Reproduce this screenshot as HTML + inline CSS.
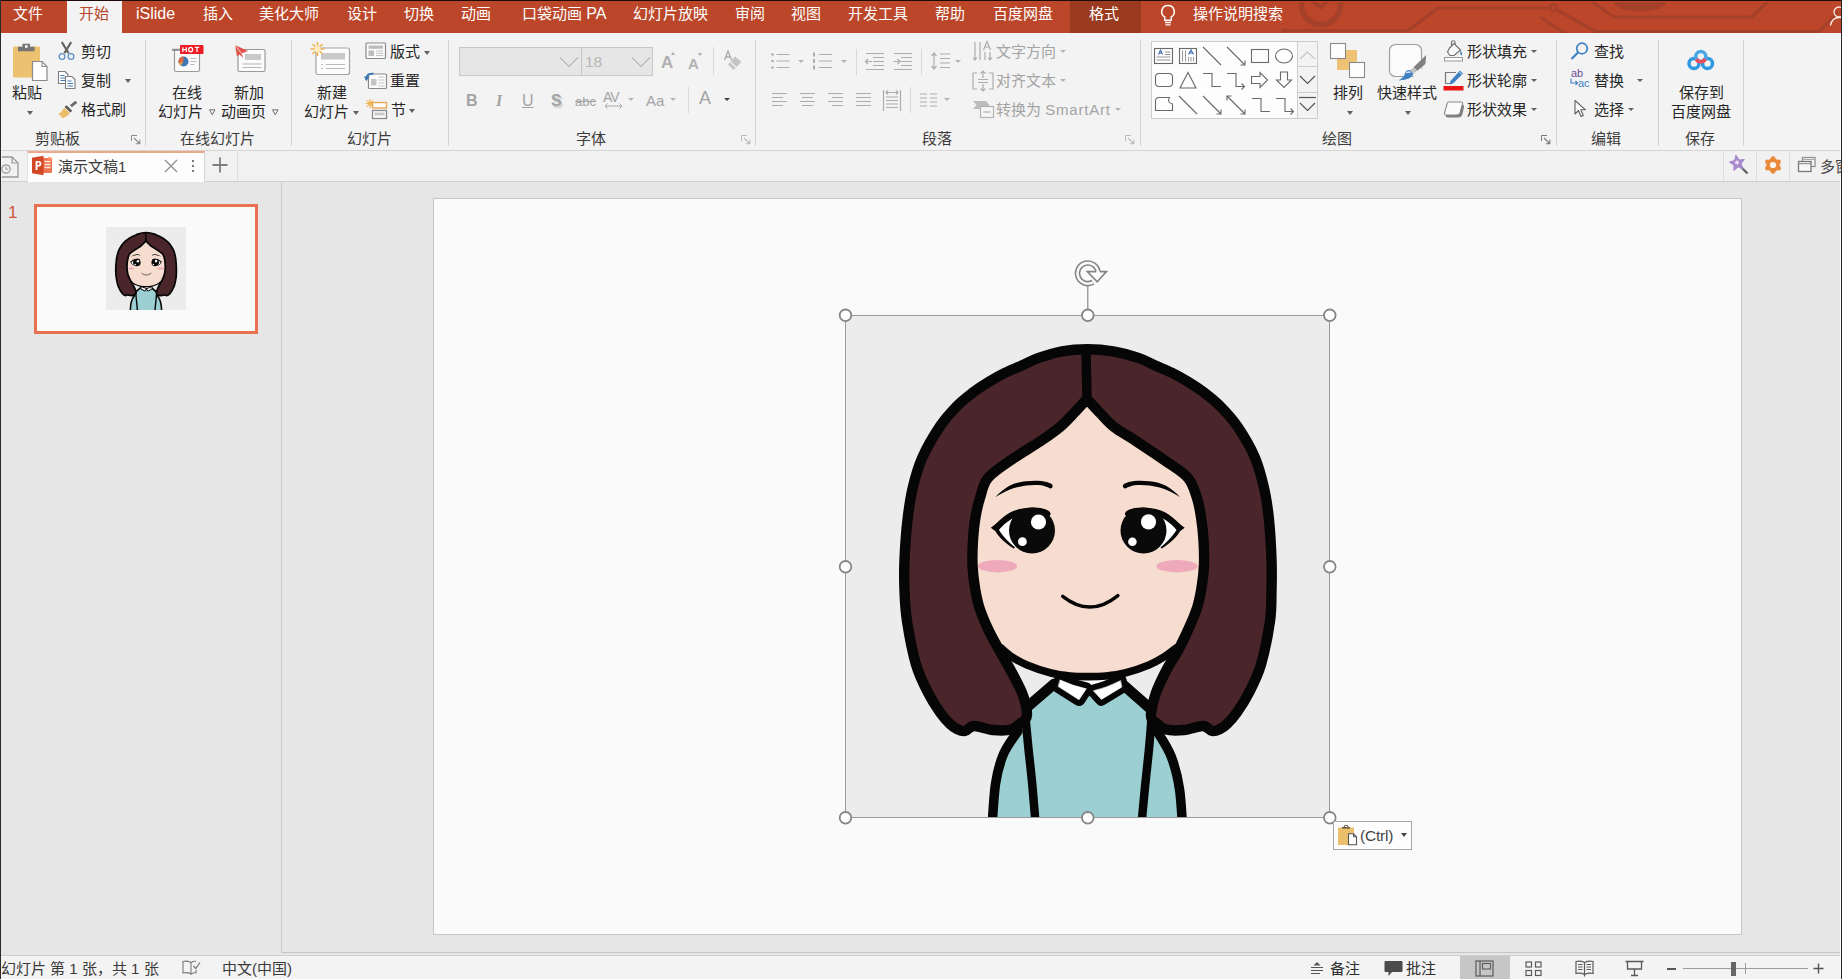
<!DOCTYPE html>
<html lang="zh-CN">
<head>
<meta charset="utf-8">
<title>PowerPoint</title>
<style>
*{box-sizing:border-box;margin:0;padding:0}
html,body{width:1842px;height:979px;overflow:hidden}
body{position:relative;background:#e6e6e6;font-family:"Liberation Sans",sans-serif;font-size:15px;color:#262626}
.a{position:absolute}
.t{position:absolute;white-space:nowrap;line-height:18px;height:18px;font-size:15px;color:#262626;margin-top:1px}
.w{color:#fff}
.g{color:#a3a3a3}
.c{text-align:center}
.sep{position:absolute;width:1px;background:#d2d2d2;top:40px;height:106px}
svg{position:absolute;overflow:visible}
.dd{position:absolute;width:0;height:0;border-left:3.5px solid transparent;border-right:3.5px solid transparent;border-top:4px solid #606060;margin:1px 0 0 1px}
.ddg{border-top-color:#b4b4b4}
.j{text-align:justify;text-align-last:justify;text-justify:inter-character}
span.j{display:inline-block;vertical-align:top;height:18px}
</style>
</head>
<body>
<!-- title / tab bar -->
<div class="a" id="titlebar" style="left:0;top:0;width:1842px;height:33px;background:#bb462a"></div>
<div class="a" style="left:0;top:33px;width:1842px;height:1px;background:#d79c8d"></div>
<div class="a" style="left:1070px;top:0;width:71px;height:33px;background:#993a21"></div>
<div class="a" style="left:1070px;top:33px;width:71px;height:1px;background:#c6968a"></div>
<div class="a" style="left:67px;top:1px;width:55px;height:33px;background:#f3f3f3"></div>
<!-- ribbon -->
<div class="a" id="ribbon" style="left:0;top:33px;width:1842px;height:117px;background:#f3f3f3"></div>
<!-- doc tab row -->
<div class="a" id="tabrow" style="left:0;top:150px;width:1842px;height:32px;background:#f1f1f1;border-top:1px solid #d6d6d6;border-bottom:1px solid #d0d0d0"></div>
<!-- workspace -->
<div class="a" style="left:281px;top:182px;width:1px;height:771px;background:#c9c9c9"></div>
<div class="a" style="left:282px;top:952px;width:1560px;height:1px;background:#c6c6c6"></div>
<!-- slide -->
<div class="a" id="slide" style="left:433px;top:198px;width:1309px;height:737px;background:#fafafa;border:1px solid #c6c6c6"></div>
<!-- status bar -->
<div class="a" id="status" style="left:0;top:955px;width:1842px;height:24px;background:#f3f3f3;border-top:1px solid #cfcfcf"></div>
<!-- window edge -->
<div class="a" style="left:0;top:0;width:1842px;height:1px;background:#1c0c08"></div>
<div class="a" style="left:0;top:0;width:1px;height:979px;background:#2b2b2b"></div>
<div class="a" style="left:1840px;top:34px;width:1px;height:945px;background:#fafafa"></div>
<div class="a" style="left:1841px;top:0;width:1px;height:979px;background:#262626"></div>
<!-- ribbon tabs -->
<div class="t w j" style="left:13px;top:4px;width:30px">文件</div>
<div class="t j" style="left:79px;top:4px;color:#b7472a;width:30px">开始</div>
<div class="t w" style="left:136px;top:4px;font-size:16px">iSlide</div>
<div class="t w j" style="left:203px;top:4px;width:30px">插入</div>
<div class="t w j" style="left:259px;top:4px;width:60px">美化大师</div>
<div class="t w j" style="left:347px;top:4px;width:30px">设计</div>
<div class="t w j" style="left:404px;top:4px;width:30px">切换</div>
<div class="t w j" style="left:461px;top:4px;width:30px">动画</div>
<div class="t w" style="left:522px;top:4px"><span class="j" style="width:60px">口袋动画</span> <span style="font-size:16px">PA</span></div>
<div class="t w j" style="left:633px;top:4px;width:75px">幻灯片放映</div>
<div class="t w j" style="left:735px;top:4px;width:30px">审阅</div>
<div class="t w j" style="left:791px;top:4px;width:30px">视图</div>
<div class="t w j" style="left:848px;top:4px;width:60px">开发工具</div>
<div class="t w j" style="left:935px;top:4px;width:30px">帮助</div>
<div class="t w j" style="left:993px;top:4px;width:60px">百度网盘</div>
<div class="t w j" style="left:1089px;top:4px;width:30px">格式</div>
<svg style="left:1158px;top:2px" width="20" height="26" viewBox="0 0 20 26"><path d="M10,3.500 a6.200,6.200 0 0 1 3.300,11.500 v3.200 h-6.600 v-3.200 a6.200,6.200 0 0 1 3.300,-11.500 z" fill="none" stroke="#fff" stroke-width="1.500"/><path d="M7,20.500 h6 M7.500,22.800 h5" stroke="#fff" stroke-width="1.300"/></svg>
<div class="t w j" style="left:1193px;top:4px;width:90px">操作说明搜索</div>
<!-- decorative title-bar pattern -->
<svg style="left:1270px;top:2px;overflow:hidden" width="572" height="31" viewBox="1270 2 572 31">
<g fill="none" stroke="#a5412a" stroke-width="3.200" stroke-linejoin="round">
<circle cx="1321" cy="5" r="19.500" stroke-width="5.500"/><path d="M1311,0 L1321,7.500 L1329,-1" stroke-width="4"/>
<path d="M1282,30.500 H1408 L1438,8 H1549"/><circle cx="1553.500" cy="7.500" r="3.200" stroke-width="2.600"/>
<path d="M1557,10 L1596,31.500 H1819 L1838,12"/>
<path d="M1540,17 L1566,34"/>
<path d="M1592,2 L1614,17 H1752 L1768,1"/>
</g>
<ellipse cx="1640" cy="1" rx="27" ry="10.500" fill="#a5412a"/>
<circle cx="1284" cy="30.500" r="2.500" fill="#a5412a"/>
</svg>
<svg style="left:1826px;top:2px;overflow:hidden" width="15" height="28" viewBox="1826 2 15 28"><circle cx="1839" cy="12" r="5" fill="none" stroke="#fbe9e2" stroke-width="1.300"/><path d="M1830.500,25.500 Q1832,17.500 1839,17.500 Q1842,17.500 1844,19" fill="none" stroke="#fbe9e2" stroke-width="1.300"/></svg>
<!-- document tab row -->
<div class="a" style="left:27px;top:151px;width:178px;height:31px;background:#fdfdfd;border-top:2px solid #eca888;border-right:1px solid #d4d4d4;border-left:1px solid #e2e2e2"></div>
<svg style="left:0;top:155px" width="22" height="24" viewBox="0 0 22 24"><path d="M2,2 h10 l6,6 v14 h-16" fill="none" stroke="#9a9a9a" stroke-width="1.300"/><path d="M12,2 v6 h6" fill="none" stroke="#9a9a9a" stroke-width="1.200"/><circle cx="6" cy="14" r="4.200" fill="none" stroke="#9a9a9a" stroke-width="1.200"/><path d="M6,11.500 v2.700 h2.200" fill="none" stroke="#9a9a9a" stroke-width="1.100"/></svg>
<svg style="left:32px;top:155px" width="21" height="21" viewBox="0 0 21 21"><rect x="6" y="3" width="14" height="15" rx="1.200" fill="#f0734f"/><path d="M12.500,6.500 h6 M12.500,9.500 h6 M12.500,12.500 h6" stroke="#fde5dc" stroke-width="1.500"/><circle cx="17.500" cy="4" r="2" fill="#ff8f5e"/><path d="M0,2.800 L11.500,0.800 V20.200 L0,18.200 Z" fill="#d24726"/><path d="M3.600,6 h3 q2.800,0 2.800,2.700 q0,2.800 -2.800,2.800 h-1.100 v3.500 h-1.900 z M5.500,7.500 v2.500 h0.900 q1.200,0 1.200,-1.250 q0,-1.250 -1.200,-1.250 z" fill="#fff" fill-rule="evenodd"/></svg>
<div class="t" style="left:58px;top:157px;color:#3a3a3a"><span class="j" style="width:60px">演示文稿</span>1</div>
<svg style="left:164px;top:159px" width="14" height="14" viewBox="0 0 14 14"><path d="M1,1 L13,13 M13,1 L1,13" stroke="#8e8e8e" stroke-width="1.300"/></svg>
<div class="a" style="left:192px;top:160px;width:2px;height:2px;background:#7a7a7a;box-shadow:0 5px 0 #7a7a7a,0 10px 0 #7a7a7a"></div>
<svg style="left:212px;top:157px" width="16" height="16" viewBox="0 0 16 16"><path d="M8,0.500 V15.500 M0.500,8 H15.500" stroke="#7d7d7d" stroke-width="1.800"/></svg>
<div class="a" style="left:237px;top:152px;width:1px;height:29px;background:#dcdcdc"></div>
<div class="a" style="left:1723px;top:152px;width:1px;height:29px;background:#dcdcdc"></div>
<div class="a" style="left:1756px;top:152px;width:1px;height:29px;background:#dcdcdc"></div>
<div class="a" style="left:1789px;top:152px;width:1px;height:29px;background:#dcdcdc"></div>
<svg style="left:1728px;top:154px" width="22" height="22" viewBox="0 0 22 22"><path d="M11.500,11.500 L19.500,19.500" stroke="#5e5e66" stroke-width="2.300"/><path d="M7.9,1.5 L10.9,6.0 L16.2,5.5 L12.9,9.7 L14.9,14.6 L9.9,12.7 L5.9,16.2 L6.1,10.9 L1.6,8.1 L6.7,6.7 Z" fill="#a88acf" stroke="#a88acf" stroke-width="1.200" stroke-linejoin="round"/><circle cx="9" cy="8.500" r="2" fill="#eeddf6"/></svg>
<svg style="left:1763px;top:155px" width="20" height="20" viewBox="0 0 20 20"><g fill="#e98b3b"><circle cx="10" cy="10" r="6.800"/><circle cx="10.00" cy="3.60" r="2.400"/><circle cx="15.54" cy="6.80" r="2.400"/><circle cx="15.54" cy="13.20" r="2.400"/><circle cx="10.00" cy="16.40" r="2.400"/><circle cx="4.46" cy="13.20" r="2.400"/><circle cx="4.46" cy="6.80" r="2.400"/></g><circle cx="10" cy="10" r="3.100" fill="#fbf6f1"/></svg>
<svg style="left:1797px;top:156px" width="19" height="17" viewBox="0 0 19 17"><rect x="5.500" y="1.500" width="12.500" height="9" fill="#f4f4f4" stroke="#8c8c8c" stroke-width="1.200"/><path d="M5.500,3.500 h12.500" stroke="#a9a9a9" stroke-width="1"/><rect x="1.500" y="5.500" width="12.500" height="10" fill="#f7f7f7" stroke="#777" stroke-width="1.300"/><path d="M1.500,7.700 h12.500" stroke="#8c8c8c" stroke-width="1.100"/></svg>
<div class="t j" style="left:1820px;top:157px;color:#444;width:30px">多窗</div>
<!-- thumbnail pane -->
<div class="t" style="left:8px;top:203px;font-size:17px;color:#d0553a">1</div>
<div class="a" style="left:34px;top:204px;width:224px;height:130px;background:#fafafa;border:3px solid #e8714f"></div>
<!-- ribbon: clipboard -->
<svg style="left:11px;top:41px" width="38" height="42" viewBox="0 0 38 42">
<rect x="2" y="5.500" width="27" height="31" rx="1" fill="#ecc16f"/>
<path d="M7,10.200 v-4.500 h4.500 v-3 h7.500 v3 h4.500 v4.500 z" fill="#757575"/><rect x="14" y="4.200" width="2.600" height="2.600" fill="#f5f5f5"/>
<path d="M21.500,20.500 h9.500 l5,5 v14 h-14.500 z" fill="#fff" stroke="#8c8c8c" stroke-width="1.200"/><path d="M31,20.500 v5 h5" fill="none" stroke="#8c8c8c" stroke-width="1.100"/>
</svg>
<div class="t j" style="left:12px;top:83px;width:30px">粘贴</div>
<div class="dd" style="left:26px;top:110px"></div>
<svg style="left:57px;top:41px" width="19" height="20" viewBox="0 0 19 20">
<path d="M4.800,1 L11.600,12.300 M14.200,1 L7.400,12.300" stroke="#636363" stroke-width="2.200" fill="none"/>
<circle cx="5" cy="15.500" r="2.900" fill="#eef3f8" stroke="#5d8ec4" stroke-width="1.300"/><circle cx="14" cy="15.500" r="2.900" fill="#eef3f8" stroke="#5d8ec4" stroke-width="1.300"/>
</svg>
<div class="t j" style="left:81px;top:42px;width:30px">剪切</div>
<svg style="left:57px;top:70px" width="20" height="20" viewBox="0 0 20 20">
<path d="M1.500,1.500 h6.500 l3,3 v9 h-9.500 z" fill="#fff" stroke="#7d7d7d" stroke-width="1.100"/><path d="M3.500,5.500 h4 M3.500,8 h5 M3.500,10.500 h5" stroke="#3f78b6" stroke-width="1"/>
<path d="M8.500,6.500 h6.500 l3,3 v9 h-9.500 z" fill="#fff" stroke="#7d7d7d" stroke-width="1.100"/><path d="M10.500,11 h4 M10.500,13.500 h5.500 M10.500,16 h5.500" stroke="#3f78b6" stroke-width="1"/>
</svg>
<div class="t j" style="left:81px;top:71px;width:30px">复制</div>
<div class="dd" style="left:124px;top:78px"></div>
<svg style="left:57px;top:100px" width="21" height="19" viewBox="0 0 21 19">
<path d="M13,5 L18.500,0.800 L20.200,3 L14.800,7.300 Z" fill="#6b6b6b"/>
<path d="M9.500,5.200 L15.200,10.800 L13.300,12.500 L7.600,7 Z" fill="#555"/>
<path d="M7,7.500 L12.800,13 Q10,17.500 5,18.200 Q4,15 1,13.800 Q5,12.500 7,7.500 Z" fill="#e9bd6a"/>
</svg>
<div class="t j" style="left:81px;top:100px;width:45px">格式刷</div>
<div class="t j" style="left:35px;top:129px;color:#3b3b3b;width:45px">剪贴板</div>
<svg class="launch" style="left:131px;top:135px" width="10" height="10" viewBox="0 0 10 10"><path d="M0.500,6 V0.500 H6" fill="none" stroke="#8a8a8a" stroke-width="1"/><path d="M3,3 L8.500,8.500 M8.800,4.800 V8.800 H4.800" fill="none" stroke="#8a8a8a" stroke-width="1.100"/></svg>
<div class="sep" style="left:145px"></div>
<!-- ribbon: online slides -->
<svg style="left:170px;top:44px" width="36" height="30" viewBox="0 0 36 30">
<rect x="4.500" y="5.500" width="25" height="22" rx="1.500" fill="#fbfbfb" stroke="#9a9a9a" stroke-width="1.200"/>
<path d="M2,5.800 h8" stroke="#8c8c8c" stroke-width="2"/>
<circle cx="13.500" cy="17.500" r="5" fill="#3e78b5"/><path d="M13.500,17.500 L13.500,12.500 A5,5 0 0 0 8.700,19 Z" fill="#e3673f"/><path d="M13.500,17.500 L8.700,19 A5,5 0 0 0 11,21.800 Z" fill="#f0a13a"/>
<path d="M20.500,14.500 h6 M20.500,17.500 h6 M20.500,20.500 h4" stroke="#b9b9b9" stroke-width="1.200"/>
<rect x="10" y="1" width="23.500" height="9" rx="0.800" fill="#ea1c24"/>
<path d="M12.800,3.300 v4.600 M16.300,3.300 v4.600 M12.800,5.600 h3.500 M18.600,5.600 a2,2.300 0 1 0 4,0 a2,2.300 0 1 0 -4,0 M24.800,3.400 h4.400 M27,3.400 v4.500" stroke="#fff" stroke-width="1.250" fill="none"/>
</svg>
<div class="t j" style="left:172px;top:83px;width:30px">在线</div>
<div class="t j" style="left:158px;top:102px;width:45px">幻灯片</div>
<svg style="left:208.500px;top:108.500px" width="6.500" height="6.500" viewBox="0 0 8 8"><path d="M0.600,1 h6.800 L4,7 z" fill="none" stroke="#555" stroke-width="1"/></svg>
<svg style="left:232px;top:44px" width="36" height="30" viewBox="0 0 36 30">
<rect x="6" y="5.500" width="27" height="22" rx="1.500" fill="#fbfbfb" stroke="#9a9a9a" stroke-width="1.200"/>
<rect x="13" y="10" width="16" height="6" fill="#c9c9c9"/><path d="M10.500,20 h19 M10.500,23.500 h19" stroke="#b5b5b5" stroke-width="1.200"/>
<path d="M3,1 L16,7 L9.500,9.500 L11.500,14 L7.500,10.500 L5,12.500 Z" fill="#e0534a"/><path d="M3,1 L9.500,9.500" stroke="#fbd9d5" stroke-width=".9"/>
</svg>
<div class="t j" style="left:234px;top:83px;width:30px">新加</div>
<div class="t j" style="left:221px;top:102px;width:45px">动画页</div>
<svg style="left:271.500px;top:108.500px" width="6.500" height="6.500" viewBox="0 0 8 8"><path d="M0.600,1 h6.800 L4,7 z" fill="none" stroke="#555" stroke-width="1"/></svg>
<div class="t j" style="left:180px;top:129px;color:#3b3b3b;width:75px">在线幻灯片</div>
<div class="sep" style="left:291px"></div>
<!-- ribbon: slides -->
<svg style="left:308px;top:40px" width="46" height="38" viewBox="0 0 46 38">
<rect x="8" y="8" width="33.500" height="26.500" rx="2" fill="#fcfcfc" stroke="#a3a3a3" stroke-width="1.200"/>
<rect x="13" y="13" width="24" height="6.500" fill="#c9c9c9"/><path d="M13,24.500 h2 M18,24.500 h19 M13,28.500 h2 M18,28.500 h19" stroke="#b9b9b9" stroke-width="1.200"/>
<g stroke="#efb352" stroke-width="1.500"><path d="M9.500,2 v14 M2.500,9 h14 M4.500,4 l10,10 M14.500,4 l-10,10"/></g><circle cx="9.500" cy="9" r="3.200" fill="#fde9c0"/>
</svg>
<div class="t j" style="left:317px;top:83px;width:30px">新建</div>
<div class="t j" style="left:304px;top:102px;width:45px">幻灯片</div>
<div class="dd" style="left:352px;top:110px"></div>
<svg style="left:365px;top:42px" width="22" height="18" viewBox="0 0 22 18"><rect x="1" y="1" width="19.500" height="15.500" rx="1" fill="#fcfcfc" stroke="#8a8a8a" stroke-width="1.200"/><rect x="3.500" y="3.500" width="14.500" height="3.300" fill="#bdbdbd"/><rect x="3.500" y="8.500" width="5.500" height="5.500" fill="#bdbdbd"/><path d="M11,9 h7 M11,11.300 h7 M11,13.600 h7" stroke="#bdbdbd" stroke-width="1"/></svg>
<div class="t j" style="left:390px;top:42px;width:30px">版式</div>
<div class="dd" style="left:423px;top:50px"></div>
<svg style="left:364px;top:70px" width="24" height="20" viewBox="0 0 24 20"><rect x="4.500" y="4" width="18" height="14.500" rx="1" fill="#fcfcfc" stroke="#8a8a8a" stroke-width="1.200"/><rect x="7" y="9" width="5.500" height="6.500" fill="#c3c3c3"/><path d="M14.500,7 h6 M14.500,10 h6 M14.500,13 h6 M14.500,16 h6" stroke="#c3c3c3" stroke-width="1"/><path d="M2,9.500 Q2.500,3 9.500,3.800" fill="none" stroke="#3e78b5" stroke-width="2"/><path d="M0,6.500 L5.500,6.500 L2.400,11.200 Z" fill="#3e78b5"/></svg>
<div class="t j" style="left:390px;top:71px;width:30px">重置</div>
<svg style="left:365px;top:98px" width="24" height="22" viewBox="0 0 24 22"><g stroke="#efb352" stroke-width="1.200"><path d="M5,1 v9 M0.500,5.500 h9 M1.800,2.300 l6.400,6.400 M8.200,2.300 l-6.400,6.400"/></g><rect x="7.500" y="4.500" width="14" height="5.500" fill="#fcfcfc" stroke="#e8a553" stroke-width="1.400"/><rect x="7.500" y="12.500" width="14" height="8" fill="#fcfcfc" stroke="#8a8a8a" stroke-width="1.300"/><rect x="9.500" y="14.500" width="10" height="3" fill="#c9c9c9"/></svg>
<div class="t j" style="left:391px;top:100px;width:15px">节</div>
<div class="dd" style="left:408px;top:108px"></div>
<div class="t j" style="left:347px;top:129px;color:#3b3b3b;width:45px">幻灯片</div>
<div class="sep" style="left:448px"></div>
<!-- ribbon: font (disabled) -->
<div class="a" style="left:459px;top:47px;width:123px;height:29px;background:#e6e6e6;border:1px solid #c8c8c8"></div>
<div class="a" style="left:581px;top:47px;width:72px;height:29px;background:#e6e6e6;border:1px solid #c8c8c8"></div>
<svg style="left:559px;top:56px" width="20" height="12" viewBox="0 0 20 12"><path d="M1,1.500 L10,10.500 L19,1.500" fill="none" stroke="#b9b9b9" stroke-width="1.200"/></svg>
<svg style="left:631px;top:56px" width="20" height="12" viewBox="0 0 20 12"><path d="M1,1.500 L10,10.500 L19,1.500" fill="none" stroke="#b9b9b9" stroke-width="1.200"/></svg>
<div class="t g" style="left:585px;top:52px;color:#b6b6b6;font-size:15.500px">18</div>
<div class="t g" style="left:661px;top:53px;font-size:17px;font-weight:bold;color:#b0b0b0">A</div><div class="a" style="left:671px;top:52px;border:2.500px solid transparent;border-bottom:3px solid #a9a9a9;border-top:0"></div>
<div class="t g" style="left:688px;top:54px;font-size:15px;font-weight:bold;color:#b0b0b0">A</div><div class="a" style="left:698px;top:53px;border:2.500px solid transparent;border-top:3px solid #a9a9a9;border-bottom:0"></div>
<div class="a" style="left:713px;top:47px;width:1px;height:28px;background:#d8d8d8"></div>
<svg style="left:722px;top:49px" width="22" height="24" viewBox="0 0 22 24"><path d="M2.500,11 L6,2 L9.500,11 M3.700,8 h4.600" fill="none" stroke="#a9a9a9" stroke-width="1.300"/><path d="M13,7.500 L19.500,13 L11.500,21 L6,15.500 Z" fill="#c4c4c4"/><path d="M8.500,13 L14,18.500" stroke="#f3f3f3" stroke-width="1.200"/></svg>
<div class="t g" style="left:466px;top:91px;font-size:16px;font-weight:bold">B</div>
<div class="t g" style="left:496px;top:91px;font-size:16px;font-style:italic;font-family:'Liberation Serif',serif;font-weight:bold">I</div>
<div class="t g" style="left:522px;top:91px;font-size:16px;text-decoration:underline">U</div>
<div class="t g" style="left:551px;top:91px;font-size:16px;font-weight:bold;text-shadow:1.500px 1.500px 1px #d0d0d0">S</div>
<div class="t g" style="left:575px;top:92px;font-size:13px;text-decoration:line-through">abc</div>
<div class="t g" style="left:603px;top:87px;font-size:14px;letter-spacing:-1px">AV</div>
<svg style="left:604px;top:103px" width="19" height="6" viewBox="0 0 19 6"><path d="M1,3 h17 M3.500,0.500 L1,3 L3.500,5.500 M15.500,0.500 L18,3 L15.500,5.500" fill="none" stroke="#a9a9a9" stroke-width="1"/></svg>
<div class="dd ddg" style="left:628px;top:98px;border-width:3px 3px 0 3px;margin:0"></div>
<div class="t g" style="left:646px;top:91px;font-size:15px">Aa</div>
<div class="dd ddg" style="left:670px;top:98px;border-width:3px 3px 0 3px;margin:0"></div>
<div class="a" style="left:688px;top:87px;width:1px;height:26px;background:#d8d8d8"></div>
<div class="t g" style="left:699px;top:88px;font-size:18px">A</div>
<div class="dd" style="left:724px;top:98px;border-width:3.500px 3px 0 3px;margin:0;border-top-color:#444"></div>
<div class="t j" style="left:576px;top:129px;color:#3b3b3b;width:30px">字体</div>
<svg style="left:741px;top:135px" width="10" height="10" viewBox="0 0 10 10"><path d="M0.500,6 V0.500 H6" fill="none" stroke="#bdbdbd" stroke-width="1"/><path d="M3,3 L8.500,8.500 M8.800,4.800 V8.800 H4.800" fill="none" stroke="#bdbdbd" stroke-width="1.100"/></svg>
<div class="sep" style="left:755px"></div>
<!-- ribbon: paragraph (disabled) -->
<svg style="left:770px;top:51px" width="190" height="22" viewBox="770 52 190 22">
<g stroke="#adadad" stroke-width="1.200" fill="none">
<path d="M776.500,55.500 h13 M776.500,62 h13 M776.500,68.500 h13"/>
<path d="M819,55.500 h13 M819,62 h13 M819,68.500 h13"/>
<path d="M866,54.500 h18 M873,58.500 h11 M873,62.500 h11 M873,66.500 h11 M866,70.500 h18 M872,62.500 h-6.500 M868,60 l-2.500,2.500 2.500,2.500"/>
<path d="M894,54.500 h18 M901,58.500 h11 M901,62.500 h11 M901,66.500 h11 M894,70.500 h18 M893.500,62.500 h6.500 M897.500,60 l2.500,2.500 -2.500,2.500"/>
<path d="M940,55 h10 M940,59.500 h10 M940,64 h10 M940,68.500 h10"/>
<path d="M934,54 v16 M931.500,57 l2.500,-3 2.500,3 M931.500,67 l2.500,3 2.500,-3"/>
</g>
<g fill="#adadad"><circle cx="772.500" cy="55.500" r="1.300"/><circle cx="772.500" cy="62" r="1.300"/><circle cx="772.500" cy="68.500" r="1.300"/>
<rect x="813" y="53.500" width="2" height="4"/><rect x="813" y="60" width="2" height="4"/><rect x="813" y="66.500" width="2" height="4"/></g>
</svg>
<div class="dd ddg" style="left:798px;top:60px;border-width:3px 3px 0 3px;margin:0"></div>
<div class="dd ddg" style="left:841px;top:60px;border-width:3px 3px 0 3px;margin:0"></div>
<div class="dd ddg" style="left:955px;top:60px;border-width:3px 3px 0 3px;margin:0"></div>
<div class="a" style="left:856px;top:49px;width:1px;height:26px;background:#d8d8d8"></div>
<div class="a" style="left:921px;top:49px;width:1px;height:26px;background:#d8d8d8"></div>
<svg style="left:770px;top:88px" width="190" height="24" viewBox="770 88 190 24">
<g stroke="#adadad" stroke-width="1.200" fill="none">
<path d="M772,93.500 h15 M772,97.500 h11 M772,101.500 h15 M772,105.500 h11"/>
<path d="M800,93.500 h15 M802,97.500 h11 M800,101.500 h15 M802,105.500 h11"/>
<path d="M828,93.500 h15 M832,97.500 h11 M828,101.500 h15 M832,105.500 h11"/>
<path d="M856,93.500 h15 M856,97.500 h15 M856,101.500 h15 M856,105.500 h15"/>
<path d="M883.500,90 v21 M900.500,90 v21 M886,92.500 h12 M888,90.500 l-2,2 2,2 M896,90.500 l2,2 -2,2 M886,97 h12 M886,100.500 h12 M886,104 h12 M886,107.500 h12"/>
<path d="M920,94 h7 M920,98 h7 M920,102 h7 M920,106 h7 M930,94 h7 M930,98 h7 M930,102 h7 M930,106 h7"/>
</g></svg>
<div class="dd ddg" style="left:944px;top:98px;border-width:3px 3px 0 3px;margin:0"></div>
<div class="a" style="left:910px;top:87px;width:1px;height:26px;background:#d8d8d8"></div>
<svg style="left:972px;top:40px" width="22" height="22" viewBox="0 0 22 22"><g stroke="#adadad" stroke-width="1.200" fill="none"><path d="M3,2 v18 M1,17.500 l2,2.500 2,-2.500 M8,2 v18 M13,12 v8 M18,12 v8 M16,17.500 l2,2.500 2,-2.500"/><path d="M11.500,10 L15,1.500 L18.500,10 M12.800,7 h4.400"/></g></svg>
<div class="t g j" style="left:996px;top:42px;width:60px">文字方向</div>
<div class="dd ddg" style="left:1060px;top:50px;border-width:3px 3px 0 3px;margin:0"></div>
<svg style="left:972px;top:70px" width="22" height="22" viewBox="0 0 22 22"><g stroke="#adadad" stroke-width="1.200" fill="none"><path d="M5,3 h-4 v16 h4 M17,3 h4 v16 h-4"/><path d="M11,1 v7 M8.500,3.500 l2.500,-2.500 2.500,2.500 M11,21 v-7 M8.500,18.500 l2.500,2.500 2.500,-2.500 M6,9.500 h10 M6,12.500 h10"/></g></svg>
<div class="t g j" style="left:996px;top:71px;width:60px">对齐文本</div>
<div class="dd ddg" style="left:1060px;top:79px;border-width:3px 3px 0 3px;margin:0"></div>
<svg style="left:972px;top:99px" width="24" height="20" viewBox="0 0 24 20"><path d="M1,2 h13 l3.500,4 -3.500,4 h-13 l3.500,-4 z" fill="#bdbdbd"/><rect x="8.500" y="7.500" width="13" height="11" fill="#f6f6f6" stroke="#b3b3b3" stroke-width="1.200"/><path d="M11.500,13 h7" stroke="#b3b3b3" stroke-width="1.200"/></svg>
<div class="t g" style="left:996px;top:100px"><span class="j" style="width:45px">转换为</span> <span style="letter-spacing:.8px">SmartArt</span></div>
<div class="dd ddg" style="left:1115px;top:108px;border-width:3px 3px 0 3px;margin:0"></div>
<div class="t j" style="left:922px;top:129px;color:#3b3b3b;width:30px">段落</div>
<svg style="left:1125px;top:135px" width="10" height="10" viewBox="0 0 10 10"><path d="M0.500,6 V0.500 H6" fill="none" stroke="#bdbdbd" stroke-width="1"/><path d="M3,3 L8.500,8.500 M8.800,4.800 V8.800 H4.800" fill="none" stroke="#bdbdbd" stroke-width="1.100"/></svg>
<div class="sep" style="left:1140px"></div>
<!-- ribbon: drawing -->
<div class="a" style="left:1151px;top:41px;width:167px;height:78px;background:#fdfdfd;border:1px solid #cdcdcd"></div>
<div class="a" style="left:1297px;top:41px;width:21px;height:78px;background:#f3f3f3;border:1px solid #cdcdcd"></div>
<div class="a" style="left:1297px;top:66px;width:21px;height:27px;border-top:1px solid #cdcdcd;border-bottom:1px solid #cdcdcd"></div>
<svg style="left:1151px;top:41px" width="167" height="78" viewBox="1151 41 167 78">
<g stroke="#6a6a6a" stroke-width="1.100" fill="none">
<!-- row 1 -->
<rect x="1154.500" y="48.500" width="18" height="15"/><path d="M1156.500,57 h14 M1156.500,60 h14 M1165,52 h5.500 M1165,54.500 h5.500" stroke="#9a9a9a" stroke-width="1"/>
<rect x="1179.500" y="48.500" width="17" height="15"/><path d="M1182.500,50.500 v11 M1185.500,50.500 v11 M1188.500,57 v4.500 M1191,57 v4.500 M1193.500,57 v4.500" stroke="#9a9a9a" stroke-width="1"/>
<path d="M1203,47 L1221,65"/>
<path d="M1227,47 L1245,65 M1245,60.500 V65 H1240.500"/>
<rect x="1251.500" y="49.500" width="17" height="13"/>
<ellipse cx="1284" cy="56" rx="8.500" ry="7"/>
<!-- row 2 -->
<rect x="1155.500" y="73.500" width="17" height="13" rx="3.500"/>
<path d="M1188,72.500 L1196,88 H1180 Z"/>
<path d="M1203,73.500 H1212 V86.500 H1221"/>
<path d="M1227,73.500 H1236 V86.500 H1244.500 M1241.500,83.500 l3,3 -3,3"/>
<path d="M1251.500,76.500 H1260 V72.500 L1267.500,80 L1260,87.500 V83.500 H1251.500 Z"/>
<path d="M1280.500,72 H1287.500 V80 H1291.500 L1284,87.500 L1276.500,80 H1280.500 Z"/>
<!-- row 3 -->
<path d="M1155.500,101 Q1155.500,97.500 1159,97.500 H1169.500 Q1166.500,102.500 1172.500,104 V110.500 H1155.500 Z"/>
<path d="M1179,96 L1197,114"/>
<path d="M1203,96 L1221,114 M1221,109.500 V114 H1216.500"/>
<path d="M1227,96 L1245,114 M1245,109.500 V114 H1240.500 M1227,100.500 V96 H1231.500"/>
<path d="M1252,98.500 H1261 V111.500 H1270"/>
<path d="M1276,98.500 H1285 V111.500 H1293.500 M1290.500,108.500 l3,3 -3,3"/>
</g>
<path d="M1158.500,54.500 L1160.500,50 L1162.500,54.500 M1159.200,53 h2.600" fill="none" stroke="#3e6fb0" stroke-width="1.100"/>
<path d="M1188.500,54.500 L1191,50 L1193.500,54.500 M1189.300,53 h3.400" fill="none" stroke="#3e6fb0" stroke-width="1.100"/>
<path d="M1300,59 L1307.500,52 L1315,59" fill="none" stroke="#c5c5c5" stroke-width="1.200"/>
<path d="M1300,76 L1307.500,83.500 L1315,76" fill="none" stroke="#555" stroke-width="1.200"/>
<path d="M1299,97.500 h17" stroke="#555" stroke-width="1.200"/>
<path d="M1300,103 L1307.500,110.500 L1315,103" fill="none" stroke="#555" stroke-width="1.200"/>
</svg>
<svg style="left:1328px;top:41px" width="40" height="40" viewBox="0 0 40 40"><rect x="9" y="9" width="20" height="20" fill="#edc274"/><rect x="2.500" y="2.500" width="15" height="15" fill="#fdfdfd" stroke="#8a8a8a" stroke-width="1.100"/><rect x="21.500" y="21.500" width="15" height="15" fill="#fdfdfd" stroke="#8a8a8a" stroke-width="1.100"/></svg>
<div class="t j" style="left:1333px;top:83px;width:30px">排列</div>
<div class="dd" style="left:1346px;top:110px"></div>
<svg style="left:1386px;top:41px" width="44" height="44" viewBox="0 0 44 44">
<rect x="3.500" y="3.500" width="32" height="32" rx="6" fill="#fbfbfb" stroke="#9d9d9d" stroke-width="1.200"/>
<path d="M36,28 L28,36" stroke="#f3f3f3" stroke-width="7"/>
<path d="M40.200,14 L39.400,23 L31.300,29.800 L27.600,26.200 Z" fill="#808080"/><path d="M31.300,29.800 L27.600,26.200 L23.800,29.200 L27.300,33 Z" fill="#c2c2c2"/>
<path d="M23.800,29.200 L27.300,33 Q26,38.500 12.500,39.500 Q18.500,36 18.800,32.500 Q20.500,28.500 23.800,29.200 Z" fill="#3f7fc4"/><path d="M20.300,32 q2.200,-1.700 4,-0.300" stroke="#d6e6f5" stroke-width="1.500" fill="none"/>
</svg>
<div class="t j" style="left:1377px;top:83px;width:60px">快速样式</div>
<div class="dd" style="left:1404px;top:110px"></div>
<svg style="left:1443px;top:40px" width="22" height="22" viewBox="0 0 22 22"><path d="M6.500,8 L11,3.500 L17.500,10 L11,15.500 H7 L4.500,12 Z" fill="#fbfbfb" stroke="#6f6f6f" stroke-width="1.200"/><path d="M8.500,6 V2.500 a1.800,1.800 0 0 1 3.600,0 v2" fill="none" stroke="#6f6f6f" stroke-width="1.100"/><path d="M17.500,10.500 q2.500,3 1,5 q-2,-1 -1,-5 z" fill="#3f7fc4"/><rect x="1.500" y="17.500" width="18" height="3.500" fill="#fbfbfb" stroke="#9a9a9a" stroke-width="1"/></svg>
<div class="t j" style="left:1467px;top:42px;width:60px">形状填充</div>
<div class="dd" style="left:1531px;top:50px;border-width:3.500px 3px 0 3px;margin:0"></div>
<svg style="left:1443px;top:69px" width="22" height="22" viewBox="0 0 22 22"><path d="M13,3.500 H2.500 V14.500 H8" fill="none" stroke="#7a7a7a" stroke-width="1.200"/><path d="M17,1.500 L20,4.500 L10,14.500 L6.500,15.500 L7.500,12 Z" fill="#3f7fc4"/><path d="M16,2.500 l3,3" stroke="#d6e6f5" stroke-width="1"/><rect x="0.500" y="17" width="20" height="4.500" fill="#ea1515"/></svg>
<div class="t j" style="left:1467px;top:71px;width:60px">形状轮廓</div>
<div class="dd" style="left:1531px;top:79px;border-width:3.500px 3px 0 3px;margin:0"></div>
<svg style="left:1443px;top:99px" width="22" height="20" viewBox="0 0 22 20"><path d="M6,3 H18 Q20,3 19.500,5 L17,14 Q16.500,16 14,16 H3 Q1,16 1.500,14 L4,5 Q4.500,3 6,3 Z" fill="#fafafa" stroke="#8a8a8a" stroke-width="1.100"/><path d="M19.500,5 L17,14 Q16.500,16 14,16 H3 Q2,18 5,18.500 H15 Q18.500,18.500 19.500,15 L21,8 Q21,6 19.500,5 Z" fill="#7f7f7f"/></svg>
<div class="t j" style="left:1467px;top:100px;width:60px">形状效果</div>
<div class="dd" style="left:1531px;top:108px;border-width:3.500px 3px 0 3px;margin:0"></div>
<div class="t j" style="left:1322px;top:129px;color:#3b3b3b;width:30px">绘图</div>
<svg style="left:1541px;top:135px" width="10" height="10" viewBox="0 0 10 10"><path d="M0.500,6 V0.500 H6" fill="none" stroke="#777" stroke-width="1"/><path d="M3,3 L8.500,8.500 M8.800,4.800 V8.800 H4.800" fill="none" stroke="#777" stroke-width="1.100"/></svg>
<div class="sep" style="left:1556px"></div>
<!-- ribbon: editing -->
<svg style="left:1570px;top:41px" width="20" height="20" viewBox="0 0 20 20"><circle cx="12" cy="7.500" r="5.300" fill="none" stroke="#3f7fc4" stroke-width="1.700"/><path d="M8,11.500 L1.500,18" stroke="#3f7fc4" stroke-width="2.200"/></svg>
<div class="t j" style="left:1594px;top:42px;width:30px">查找</div>
<div class="t" style="left:1571px;top:66px;font-size:11px;color:#6b4a9c;line-height:12px;height:12px">ab</div>
<div class="t" style="left:1578px;top:76px;font-size:11px;color:#3f7fc4;line-height:12px;height:12px">ac</div>
<svg style="left:1570px;top:78px" width="9" height="10" viewBox="0 0 9 10"><path d="M1,0.500 v4.500 h6.500 M5.500,3 l2,2 -2,2" fill="none" stroke="#3f7fc4" stroke-width="1.100"/></svg>
<div class="t j" style="left:1594px;top:71px;width:30px">替换</div>
<div class="dd" style="left:1637px;top:79px;border-width:3.500px 3px 0 3px;margin:0"></div>
<svg style="left:1573px;top:99px" width="14" height="20" viewBox="0 0 14 20"><path d="M2,1.500 V15 L5.500,11.500 L8,17.500 L10.300,16.500 L7.800,10.800 H12.500 Z" fill="#fdfdfd" stroke="#5f5f5f" stroke-width="1.100" stroke-linejoin="round"/></svg>
<div class="t j" style="left:1594px;top:100px;width:30px">选择</div>
<div class="dd" style="left:1628px;top:108px;border-width:3.500px 3px 0 3px;margin:0"></div>
<div class="t j" style="left:1591px;top:129px;color:#3b3b3b;width:30px">编辑</div>
<div class="sep" style="left:1658px"></div>
<!-- ribbon: save -->
<svg style="left:1686px;top:48px" width="30" height="24" viewBox="0 0 30 24">
<circle cx="8" cy="15.500" r="5" fill="none" stroke="#2f9ae0" stroke-width="3.600"/><circle cx="21.500" cy="15.500" r="5" fill="none" stroke="#2f9ae0" stroke-width="3.600"/>
<circle cx="14.800" cy="8.500" r="5" fill="none" stroke="#4aa7e6" stroke-width="3.600"/>
<path d="M10.300,11 A5,5 0 0 0 19.300,11" fill="none" stroke="#ee4d5a" stroke-width="3.600"/>
</svg>
<div class="t j" style="left:1679px;top:83px;width:45px">保存到</div>
<div class="t j" style="left:1671px;top:102px;width:60px">百度网盘</div>
<div class="t j" style="left:1685px;top:129px;color:#3b3b3b;width:30px">保存</div>
<div class="sep" style="left:1743px"></div>
<!-- picture -->
<svg width="0" height="0" style="left:0;top:0"><defs><symbol id="girl" viewBox="845 315 485 503" preserveAspectRatio="none">
<rect x="845" y="315" width="485" height="503" fill="#ececec"/>
<g stroke="#060606" stroke-linejoin="round" stroke-linecap="round" fill="none">
<path d="M991.5,835.0 C992.2,826.5 993.5,797.5 995.5,784.0 C997.5,770.5 999.8,762.8 1003.5,754.0 C1007.2,745.2 1015.6,734.8 1018.0,731.0 L1029,708 L1056,688 L1060,680 L1120,680 L1125,688 L1148,706 L1157,731 C1159.3,735.2 1167.2,746.3 1171.0,756.0 C1174.8,765.7 1177.5,775.8 1179.5,789.0 C1181.5,802.2 1182.4,827.3 1183.0,835.0 Z" fill="#9bcfd1" stroke="none"/>
<path d="M1018.0,731.0 C1015.6,734.8 1007.2,745.2 1003.5,754.0 C999.8,762.8 997.5,770.5 995.5,784.0 C993.5,797.5 992.2,826.5 991.5,835.0" stroke-width="9.5"/>
<path d="M1157.0,731.0 C1159.3,735.2 1167.2,746.3 1171.0,756.0 C1174.8,765.7 1177.5,775.8 1179.5,789.0 C1181.5,802.2 1182.4,827.3 1183.0,835.0" stroke-width="9.5"/>
<path d="M1025.0,712.0 C1025.6,718.2 1027.2,736.5 1028.5,749.0 C1029.8,761.5 1031.2,772.7 1032.5,787.0 C1033.8,801.3 1035.8,827.0 1036.5,835.0" stroke-width="8.5"/>
<path d="M1152.0,712.0 C1151.5,718.2 1150.2,736.5 1149.0,749.0 C1147.8,761.5 1146.4,772.7 1145.0,787.0 C1143.6,801.3 1141.2,827.0 1140.5,835.0" stroke-width="8.5"/>
<path d="M1029,705.5 L1054,684 M1149,707.5 L1124,685.5" stroke-width="10.5"/>
<path d="M1087.0,399.0 C1084.8,401.3 1078.5,408.3 1074.0,413.0 C1069.5,417.7 1065.7,422.2 1060.0,427.0 C1054.3,431.8 1047.9,436.2 1040.0,441.5 C1032.1,446.8 1021.3,452.9 1012.6,459.0 C1003.9,465.1 993.4,471.5 988.0,478.0 C982.6,484.5 982.1,491.5 980.0,498.0 C977.9,504.5 976.7,510.0 975.5,517.0 C974.3,524.0 973.5,532.0 973.0,540.0 C972.5,548.0 972.2,557.0 972.5,565.0 C972.8,573.0 973.8,580.8 975.0,588.0 C976.2,595.2 977.2,601.0 979.5,608.0 C981.8,615.0 985.2,622.9 988.5,630.0 C991.8,637.1 995.6,646.1 999.5,650.6 C1003.4,655.1 1007.4,654.6 1012.0,657.0 C1016.6,659.4 1020.5,662.3 1027.0,665.0 C1033.5,667.7 1043.8,671.2 1051.0,673.0 C1058.2,674.8 1063.8,675.4 1070.0,676.0 C1076.2,676.6 1082.0,676.6 1088.0,676.6 C1094.0,676.6 1099.8,676.6 1106.0,676.0 C1112.2,675.4 1117.8,674.8 1125.0,673.0 C1132.2,671.2 1142.5,667.7 1149.0,665.0 C1155.5,662.3 1159.2,659.4 1164.0,657.0 C1168.8,654.6 1174.0,655.1 1178.0,650.6 C1182.0,646.1 1184.8,637.1 1188.0,630.0 C1191.2,622.9 1194.8,615.0 1197.0,608.0 C1199.2,601.0 1200.3,595.2 1201.5,588.0 C1202.7,580.8 1203.7,573.0 1204.0,565.0 C1204.3,557.0 1204.0,548.0 1203.5,540.0 C1203.0,532.0 1202.1,524.0 1201.0,517.0 C1199.9,510.0 1199.2,504.5 1197.0,498.0 C1194.8,491.5 1193.2,484.2 1188.0,478.0 C1182.8,471.8 1174.4,467.3 1165.6,461.0 C1156.8,454.7 1143.6,446.1 1135.0,440.4 C1126.4,434.7 1119.8,431.6 1114.0,427.0 C1108.2,422.4 1104.5,417.7 1100.0,413.0 C1095.5,408.3 1089.2,401.3 1087.0,399.0 Z" fill="#f6ddd0" stroke="none"/>
<path d="M1058,674 H1120 L1104,692 H1074 Z" fill="#fdfdfd" stroke="none"/>
<path d="M1060.3,680.1 Q1073.3,686.200 1086.3,688.8 L1079,699.8 L1058.4,686.6 Z" fill="#060606" stroke-width="12.600"/><path d="M1120.4,680.7 Q1107,687.700 1093.4,690.8 L1101.4,699.4 L1121.6,687.2 Z" fill="#060606" stroke-width="12.600"/>
<path d="M1060.3,680.1 Q1073.3,686.200 1086.3,688.8 L1079,699.8 L1058.4,686.6 Z" fill="#fff" stroke="#fff" stroke-width="0.600"/><path d="M1120.4,680.7 Q1107,687.700 1093.4,690.8 L1101.4,699.4 L1121.6,687.2 Z" fill="#fff" stroke="#fff" stroke-width="0.600"/>
<path d="M1001.0,648.0 C1002.8,649.5 1007.7,654.2 1012.0,657.0 C1016.3,659.8 1020.5,662.3 1027.0,665.0 C1033.5,667.7 1043.8,671.2 1051.0,673.0 C1058.2,674.8 1063.8,675.4 1070.0,676.0 C1076.2,676.6 1082.0,676.6 1088.0,676.6 C1094.0,676.6 1099.8,676.6 1106.0,676.0 C1112.2,675.4 1117.8,674.8 1125.0,673.0 C1132.2,671.2 1142.5,667.7 1149.0,665.0 C1155.5,662.3 1159.5,659.8 1164.0,657.0 C1168.5,654.2 1174.0,649.5 1176.0,648.0" stroke-width="7.600"/>
<path d="M1022.0,722.0 C1020.2,723.2 1015.8,728.2 1011.0,729.5 C1006.2,730.8 999.2,730.6 993.0,730.0 C986.8,729.4 978.7,725.8 974.0,726.0 C969.3,726.2 967.8,730.5 965.0,731.0 C962.2,731.5 959.5,730.2 957.0,729.0 C954.5,727.8 952.8,726.7 950.0,724.0 C947.2,721.3 944.2,718.2 940.5,713.0 C936.8,707.8 932.1,700.7 928.0,692.6 C923.9,684.5 919.5,676.4 916.0,664.5 C912.5,652.6 908.9,633.4 907.0,621.0 C905.1,608.6 904.9,600.2 904.5,590.0 C904.1,579.8 904.0,571.7 904.5,560.0 C905.0,548.3 906.1,532.0 907.5,520.0 C908.9,508.0 910.2,498.4 912.7,487.9 C915.2,477.4 917.9,467.5 922.5,457.2 C927.1,446.9 934.6,434.4 940.2,426.0 C945.9,417.6 951.0,412.2 956.4,406.6 C961.8,401.1 967.3,396.9 972.7,392.7 C978.1,388.5 983.5,385.0 989.0,381.7 C994.5,378.4 999.9,375.4 1005.4,372.7 C1010.9,370.0 1016.4,368.0 1021.8,365.6 C1027.2,363.2 1031.3,360.6 1038.0,358.2 C1044.7,355.8 1053.8,352.8 1062.0,351.3 C1070.2,349.8 1079.0,349.2 1087.5,349.2 C1096.0,349.2 1104.4,349.8 1113.0,351.3 C1121.6,352.8 1132.0,355.8 1139.0,358.2 C1146.0,360.6 1149.8,363.2 1155.2,365.6 C1160.6,368.0 1166.1,370.0 1171.6,372.7 C1177.1,375.4 1182.5,378.4 1188.0,381.7 C1193.5,385.0 1198.9,388.5 1204.3,392.7 C1209.7,396.9 1215.0,401.0 1220.6,406.6 C1226.1,412.2 1231.9,418.2 1237.6,426.6 C1243.3,435.0 1250.4,447.0 1254.8,457.2 C1259.2,467.4 1261.6,477.4 1264.0,487.9 C1266.4,498.4 1267.8,508.0 1269.0,520.0 C1270.2,532.0 1271.1,548.3 1271.5,560.0 C1271.9,571.7 1271.8,579.8 1271.5,590.0 C1271.2,600.2 1271.8,608.6 1270.0,621.0 C1268.2,633.4 1264.5,652.6 1261.0,664.5 C1257.5,676.4 1253.1,684.5 1249.0,692.6 C1244.9,700.7 1240.2,707.8 1236.5,713.0 C1232.8,718.2 1229.8,721.3 1227.0,724.0 C1224.2,726.7 1222.5,727.8 1220.0,729.0 C1217.5,730.2 1214.8,731.5 1212.0,731.0 C1209.2,730.5 1207.7,726.2 1203.0,726.0 C1198.3,725.8 1190.2,729.4 1184.0,730.0 C1177.8,730.6 1170.8,730.8 1166.0,729.5 C1161.2,728.2 1156.8,723.2 1155.0,722.0 L1153.0,722.0 C1152.7,720.7 1150.5,718.8 1151.0,714.0 C1151.5,709.2 1153.0,701.0 1155.7,693.5 C1158.4,686.0 1163.3,676.1 1167.0,669.0 C1170.7,661.9 1174.5,657.1 1178.0,650.6 C1181.5,644.1 1184.8,637.1 1188.0,630.0 C1191.2,622.9 1194.8,615.0 1197.0,608.0 C1199.2,601.0 1200.3,595.2 1201.5,588.0 C1202.7,580.8 1203.7,573.0 1204.0,565.0 C1204.3,557.0 1204.0,548.0 1203.5,540.0 C1203.0,532.0 1202.1,524.0 1201.0,517.0 C1199.9,510.0 1199.2,504.5 1197.0,498.0 C1194.8,491.5 1193.2,484.2 1188.0,478.0 C1182.8,471.8 1174.4,467.3 1165.6,461.0 C1156.8,454.7 1143.6,446.1 1135.0,440.4 C1126.4,434.7 1119.8,431.6 1114.0,427.0 C1108.2,422.4 1104.5,417.7 1100.0,413.0 C1095.5,408.3 1089.2,401.3 1087.0,399.0 C1084.8,401.3 1078.5,408.3 1074.0,413.0 C1069.5,417.7 1065.7,422.2 1060.0,427.0 C1054.3,431.8 1047.9,436.2 1040.0,441.5 C1032.1,446.8 1021.3,452.9 1012.6,459.0 C1003.9,465.1 993.4,471.5 988.0,478.0 C982.6,484.5 982.1,491.5 980.0,498.0 C977.9,504.5 976.7,510.0 975.5,517.0 C974.3,524.0 973.5,532.0 973.0,540.0 C972.5,548.0 972.2,557.0 972.5,565.0 C972.8,573.0 973.8,580.8 975.0,588.0 C976.2,595.2 977.2,601.0 979.5,608.0 C981.8,615.0 985.2,622.9 988.5,630.0 C991.8,637.1 995.9,644.1 999.5,650.6 C1003.1,657.1 1006.1,661.7 1010.0,669.0 C1013.9,676.3 1019.9,687.0 1022.7,694.5 C1025.5,702.0 1026.8,709.4 1027.0,714.0 C1027.2,718.6 1024.5,720.7 1024.0,722.0 Z" fill="#4a262a" stroke-width="10.400"/>
<path d="M1086,350 L1087,399" stroke-width="9.5"/>
</g>
<ellipse cx="997.6" cy="566.2" rx="19.5" ry="6.2" fill="#eeaaba"/><ellipse cx="1177" cy="566.2" rx="20.5" ry="6.2" fill="#eeaaba"/>
<path d="M995.3,497.2 C1000,492 1005,488.3 1010,485.5 C1015,483 1021,481.6 1026,481.2 C1031,480.6 1037,480.5 1041.3,481 C1045,481.5 1049,482.5 1051.3,483.8 C1053.6,485.5 1052.8,488.6 1050,488.4 C1047,487 1044,485.6 1041.3,485.3 C1036,484.8 1031,484.9 1026,485.5 C1021,486.3 1015,487.6 1010.6,489.3 C1005,491.5 1000,494.5 995.3,497.2 Z" fill="#060606"/>
<path d="M1180.2,497.2 C1175.5,492 1170.5,488.3 1165.5,485.5 C1160.5,483 1154.5,481.6 1149.5,481.2 C1144.5,480.6 1138.5,480.5 1134.2,481 C1130.5,481.5 1126.5,482.5 1124.2,483.8 C1121.9,485.5 1122.7,488.6 1125.5,488.4 C1128.5,487 1131.5,485.6 1134.2,485.3 C1139.5,484.8 1144.5,484.9 1149.5,485.5 C1154.5,486.3 1160.5,487.6 1164.9,489.3 C1170.5,491.5 1175.5,494.5 1180.2,497.2 Z" fill="#060606"/>
<path d="M997.5,529.5 C1002,523.5 1008,518 1017,514 L1027,541 L1015,548 C1007,542 1001,535 997.5,529.5 Z" fill="#fff"/>
<path d="M1178,529.5 C1173.5,523.5 1167.5,518 1158.5,514 L1148.5,541 L1160.5,548 C1168.5,542 1174.5,535 1178,529.5 Z" fill="#fff"/>
<path d="M990.8,527.7 C996,525 1003,515 1014,510.8 C1022,507.3 1040,505.5 1048,510.5 C1051,512.5 1051.5,515 1049,516 L1032,522 L1017.5,516 C1009,519.5 1003,525 999,530 C1002,535 1008,542 1015,547.2 L1013.800,548.6 C1005,543 998,536 995.5,531.2 C994,529.8 992.3,528.9 990.8,527.7 Z" fill="#060606"/>
<path d="M1184.7,527.7 C1179.5,525 1172.5,515 1161.5,510.8 C1153.5,507.3 1135.5,505.5 1127.5,510.5 C1124.5,512.5 1124,515 1126.5,516 L1143.5,522 L1158,516 C1166.5,519.5 1172.5,525 1176.5,530 C1173.5,535 1167.5,542 1160.5,547.2 L1161.7,548.6 C1170.5,543 1177.5,536 1180,531.2 C1181.5,529.8 1183.2,528.9 1184.7,527.7 Z" fill="#060606"/>
<circle cx="1032" cy="530.5" r="23" fill="#0a0a0a"/><circle cx="1143.5" cy="530.5" r="23" fill="#0a0a0a"/>
<circle cx="1038.5" cy="522" r="7.6" fill="#fff"/><circle cx="1022.4" cy="541.7" r="4.4" fill="#fff"/>
<circle cx="1148.5" cy="521.8" r="7.6" fill="#fff"/><circle cx="1132.4" cy="541.7" r="4.3" fill="#fff"/>
<path d="M1062.7,596.4 Q1090.3,618.2 1117.9,595.6" fill="none" stroke="#060606" stroke-width="3.4" stroke-linecap="round"/>
</symbol></defs></svg>
<svg style="left:845px;top:315px" width="485" height="503"><use href="#girl" x="0" y="0" width="485" height="503"/></svg>
<svg style="left:106px;top:227px" width="80" height="83"><use href="#girl" x="0" y="0" width="80" height="83"/></svg>
<!-- selection frame -->
<svg style="left:0;top:0" width="1842" height="979">
<rect x="845.5" y="315.5" width="484" height="502" fill="none" stroke="#9a9a9a" stroke-width="1"/>
<path d="M1087.800,286 V309" stroke="#8a8a8a" stroke-width="1.200"/>
<g fill="#fff" stroke="#858585" stroke-width="1.800">
<circle cx="845.500" cy="315.3" r="5.800"/><circle cx="1087.800" cy="315.300" r="5.800"/><circle cx="1329.800" cy="315.300" r="5.800"/>
<circle cx="845.500" cy="566.800" r="5.800"/><circle cx="1329.800" cy="566.800" r="5.800"/>
<circle cx="845.500" cy="817.800" r="5.800"/><circle cx="1087.800" cy="817.800" r="5.800"/><circle cx="1329.800" cy="817.800" r="5.800"/>
</g>
<!-- rotate handle -->
<path d="M1093,282.200 A10.300,10.300 0 1 1 1098.100,272.500" fill="none" stroke="#858585" stroke-width="5.600"/>
<path d="M1087.400,271.600 H1106.400 L1097.200,281.800 Z" fill="#fff" stroke="#858585" stroke-width="1.700" stroke-linejoin="miter"/>
<path d="M1093,282.200 A10.300,10.300 0 1 1 1098.100,272.500" fill="none" stroke="#fbfbfb" stroke-width="2.400"/>
<path d="M1096,272.600 h4" stroke="#fbfbfb" stroke-width="2.200"/>
</svg>
<!-- paste options -->
<div class="a" style="left:1333px;top:821px;width:79px;height:29px;background:#fdfdfd;border:1px solid #a6a6a6"></div>
<svg style="left:1337px;top:824px" width="22" height="22" viewBox="0 0 22 22">
<rect x="1" y="3.500" width="16" height="17.500" fill="#ecbf6a"/>
<path d="M5,3.800 h8" stroke="#6b5a49" stroke-width="1.600"/><path d="M7.300,3 a1.800,1.800 0 0 1 3.600,0" fill="none" stroke="#6b5a49" stroke-width="1.100"/>
<path d="M11.500,9.800 h5 l3,3 v8 h-8 z" fill="#fff" stroke="#555" stroke-width="1.100"/><path d="M16.500,9.800 v3 h3" fill="none" stroke="#555" stroke-width="1"/>
</svg>
<div class="t" style="left:1360px;top:826px;font-size:15.500px;color:#444;letter-spacing:-.2px">(Ctrl)</div>
<div class="dd" style="left:1401px;top:833px;border-top-color:#444;margin:0"></div>
<!-- status bar -->
<div class="t" style="left:1px;top:959px;color:#3a3a3a"><span class="j" style="width:45px">幻灯片</span> <span class="j" style="width:15px">第</span> 1 <span class="j" style="width:45px">张，共</span> 1 <span class="j" style="width:15px">张</span></div>
<svg style="left:182px;top:960px" width="20" height="16" viewBox="0 0 20 16"><path d="M9,2.500 Q5,0.500 1,1.500 V13 Q5,12 9,14 Z" fill="none" stroke="#7a7a7a" stroke-width="1.100"/><path d="M9,2.500 Q11,1 14,1.200 M9,14 Q11.500,12.500 14,12.800 V10" fill="none" stroke="#7a7a7a" stroke-width="1.100"/><path d="M11.500,6 l2.300,2.500 4.200,-6" fill="none" stroke="#7a7a7a" stroke-width="1.300"/></svg>
<div class="t" style="left:222px;top:959px;color:#3a3a3a"><span class="j" style="width:30px">中文</span>(<span class="j" style="width:30px">中国</span>)</div>
<svg style="left:1310px;top:961px" width="14" height="14" viewBox="0 0 14 14"><path d="M3.500,4.500 L7,1 L10.500,4.500 Z" fill="#555"/><path d="M1,6.500 h12 M1,9.500 h12 M1,12.500 h9" stroke="#555" stroke-width="1.100"/></svg>
<div class="t j" style="left:1330px;top:959px;color:#2e2e2e;width:30px">备注</div>
<svg style="left:1384px;top:960px" width="19" height="17" viewBox="0 0 19 17"><path d="M1.500,1 H17.500 Q18.500,1 18.500,2 V11 Q18.500,12 17.500,12 H8 L4.500,16 V12 H1.500 Q0.500,12 0.500,11 V2 Q0.500,1 1.500,1 Z" fill="#4a4a4a"/></svg>
<div class="t j" style="left:1406px;top:959px;color:#2e2e2e;width:30px">批注</div>
<div class="a" style="left:1460px;top:956px;width:50px;height:23px;background:#c6c6c6"></div>
<svg style="left:1475px;top:960px" width="19" height="17" viewBox="0 0 19 17"><rect x="1" y="1" width="17" height="15" fill="none" stroke="#5a5a5a" stroke-width="1.200"/><path d="M5,1 V16" stroke="#5a5a5a" stroke-width="1.200"/><rect x="7.500" y="3.500" width="8" height="5.500" fill="none" stroke="#5a5a5a" stroke-width="1.100"/></svg>
<svg style="left:1525px;top:961px" width="18" height="16" viewBox="0 0 18 16"><g fill="none" stroke="#5a5a5a" stroke-width="1.200"><rect x="1" y="1" width="5.500" height="5"/><rect x="10.500" y="1" width="5.500" height="5"/><rect x="1" y="9.500" width="5.500" height="5"/><rect x="10.500" y="9.500" width="5.500" height="5"/></g></svg>
<svg style="left:1575px;top:960px" width="19" height="17" viewBox="0 0 19 17"><path d="M9.500,2.500 Q5.500,0.500 1,1.500 V13.500 Q5.500,12.500 9.500,14.500 Q13.500,12.500 18,13.500 V1.500 Q13.500,0.500 9.500,2.500 Z M9.500,2.500 V16.500" fill="none" stroke="#5a5a5a" stroke-width="1.200"/><path d="M3,4.500 h4.500 M3,7 h4.500 M3,9.500 h4.500 M11.500,4.500 h4.500 M11.500,7 h4.500 M11.500,9.500 h4.500" stroke="#5a5a5a" stroke-width="1"/></svg>
<svg style="left:1625px;top:960px" width="19" height="17" viewBox="0 0 19 17"><path d="M0.500,1.500 h18 M2.500,1.500 V9 H16.500 V1.500 M9.500,9 V15 M6,15.500 h7" fill="none" stroke="#5a5a5a" stroke-width="1.300"/></svg>
<div class="a" style="left:1667px;top:968px;width:9px;height:1.500px;background:#555"></div>
<div class="a" style="left:1683px;top:968px;width:125px;height:1px;background:#9c9c9c"></div>
<div class="a" style="left:1745px;top:963px;width:1px;height:11px;background:#9c9c9c"></div>
<div class="a" style="left:1731px;top:962px;width:5px;height:14px;background:#666"></div>
<svg style="left:1813px;top:963px" width="11" height="11" viewBox="0 0 11 11"><path d="M5.500,0.500 V10.500 M0.500,5.500 H10.500" stroke="#555" stroke-width="1.400"/></svg>
</body>
</html>
